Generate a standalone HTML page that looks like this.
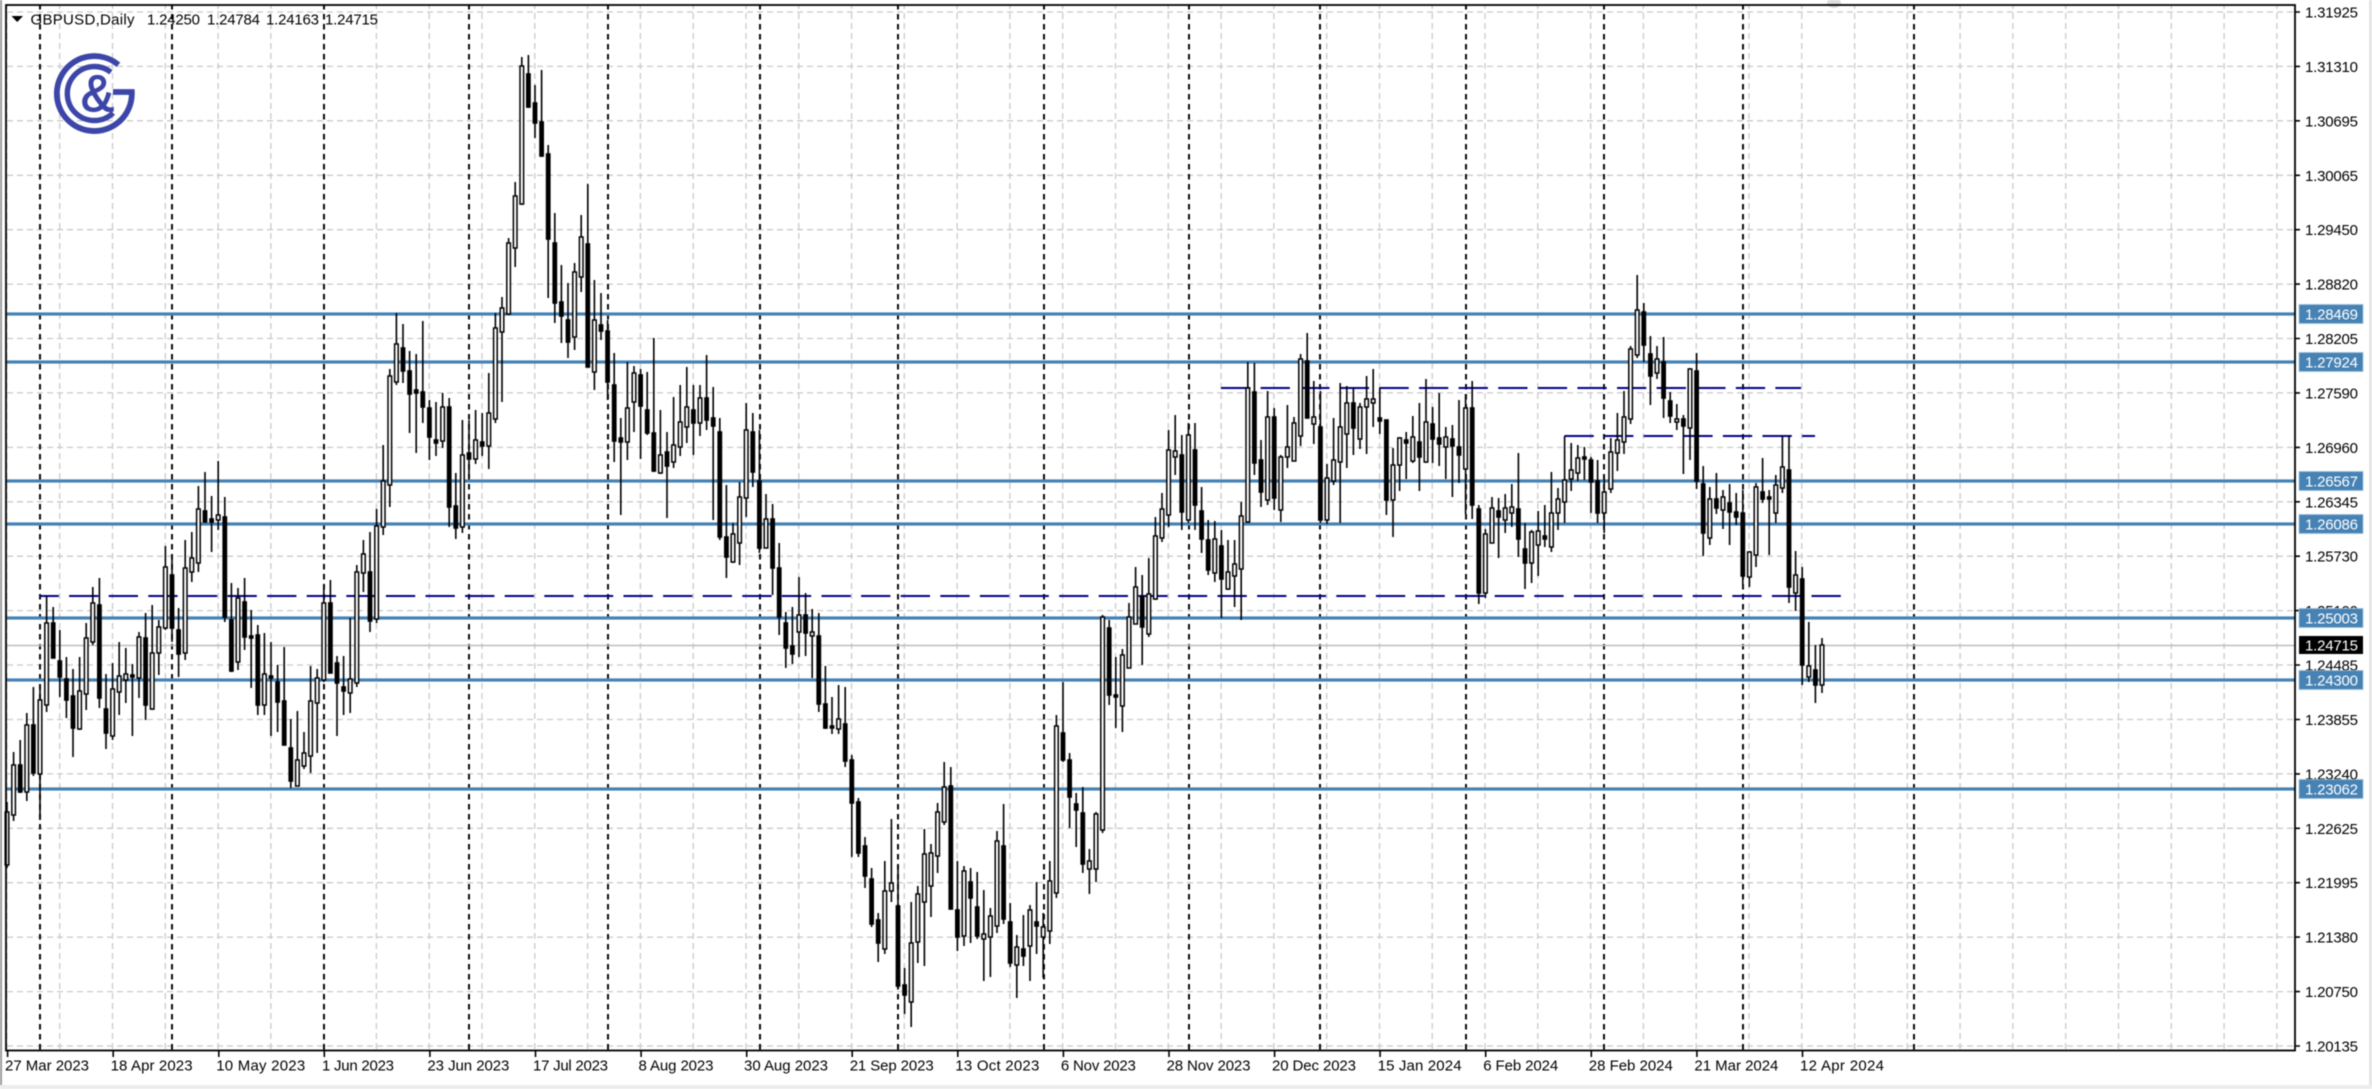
<!DOCTYPE html>
<html>
<head>
<meta charset="utf-8">
<title>GBPUSD,Daily</title>
<style>
html,body{margin:0;padding:0;background:#fff;width:2372px;height:1089px;overflow:hidden}
svg{display:block;position:absolute;left:0;top:0;filter:blur(.4px)}
text{font-family:"Liberation Sans",sans-serif;font-size:15px;fill:#000}
.w{fill:#fff}
</style>
</head>
<body>
<svg id="c" xmlns="http://www.w3.org/2000/svg" width="2372" height="1089" viewBox="0 0 2372 1089">
<rect width="2372" height="1089" fill="#fff"/>
<rect x="0" y="0" width="2" height="1089" fill="#9a9a9a"/>
<rect x="2369" y="0" width="3" height="1089" fill="#e4e4e4"/>
<rect x="0" y="1085" width="2372" height="4" fill="#ececec"/>
<ellipse cx="1834" cy="3" rx="7" ry="5" fill="#dcdcdc"/>
<g id="back"></g>

<g id="logo" fill="none" stroke="#3c46a8">
<path d="M118.4 64.8A37.5 37.5 0 1 0 131.8 92H113" stroke-width="5.8"/>
<path d="M110.9 72.2A27 27 0 1 0 113.1 112.9" stroke-width="5.4"/>
<text x="81" y="111" textLength="33" lengthAdjust="spacingAndGlyphs" style="font-size:51px;fill:#3c46a8;stroke:#3c46a8;stroke-width:1.2">&amp;</text>
</g>

<g id="candles"></g>

<path d="M11.5 16H23L17.2 22Z" fill="#000"/>
<text x="30.5" y="24.5" textLength="104">GBPUSD,Daily</text>
<text x="147" y="24.5" textLength="53">1.24250</text>
<text x="207" y="24.5" textLength="53">1.24784</text>
<text x="266" y="24.5" textLength="53">1.24163</text>
<text x="325" y="24.5" textLength="53">1.24715</text>

<g id="frame"></g>

<g id="yl">
<text x="2305" y="17.5" textLength="53">1.31925</text>
<text x="2305" y="71.9" textLength="53">1.31310</text>
<text x="2305" y="126.3" textLength="53">1.30695</text>
<text x="2305" y="180.8" textLength="53">1.30065</text>
<text x="2305" y="235.2" textLength="53">1.29450</text>
<text x="2305" y="289.6" textLength="53">1.28820</text>
<text x="2305" y="344" textLength="53">1.28205</text>
<text x="2305" y="398.4" textLength="53">1.27590</text>
<text x="2305" y="452.9" textLength="53">1.26960</text>
<text x="2305" y="507.3" textLength="53">1.26345</text>
<text x="2305" y="561.7" textLength="53">1.25730</text>
<text x="2305" y="616.1" textLength="53">1.25100</text>
<text x="2305" y="670.5" textLength="53">1.24485</text>
<text x="2305" y="725" textLength="53">1.23855</text>
<text x="2305" y="779.4" textLength="53">1.23240</text>
<text x="2305" y="833.8" textLength="53">1.22625</text>
<text x="2305" y="888.2" textLength="53">1.21995</text>
<text x="2305" y="942.6" textLength="53">1.21380</text>
<text x="2305" y="997.1" textLength="53">1.20750</text>
<text x="2305" y="1051.5" textLength="53">1.20135</text>
</g>

<g>
<rect x="2299" y="304.5" width="64" height="19" fill="#4682b4" stroke="#9dbfdc" stroke-width=".8"/>
<text class="w" x="2305" y="319.5" textLength="53">1.28469</text>
<rect x="2299" y="352.5" width="64" height="19" fill="#4682b4" stroke="#9dbfdc" stroke-width=".8"/>
<text class="w" x="2305" y="367.5" textLength="53">1.27924</text>
<rect x="2299" y="471.5" width="64" height="19" fill="#4682b4" stroke="#9dbfdc" stroke-width=".8"/>
<text class="w" x="2305" y="486.5" textLength="53">1.26567</text>
<rect x="2299" y="514.5" width="64" height="19" fill="#4682b4" stroke="#9dbfdc" stroke-width=".8"/>
<text class="w" x="2305" y="529.5" textLength="53">1.26086</text>
<rect x="2299" y="608.5" width="64" height="19" fill="#4682b4" stroke="#9dbfdc" stroke-width=".8"/>
<text class="w" x="2305" y="623.5" textLength="53">1.25003</text>
<rect x="2299" y="636" width="64" height="18" fill="#000"/>
<text class="w" x="2305" y="650.5" textLength="53">1.24715</text>
<rect x="2299" y="670.5" width="64" height="19" fill="#4682b4" stroke="#9dbfdc" stroke-width=".8"/>
<text class="w" x="2305" y="685.5" textLength="53">1.24300</text>
<rect x="2299" y="779.5" width="64" height="19" fill="#4682b4" stroke="#9dbfdc" stroke-width=".8"/>
<text class="w" x="2305" y="794.5" textLength="53">1.23062</text>
</g>

<g id="xl">
<text x="5" y="1070.5" textLength="84">27 Mar 2023</text>
<text x="110.6" y="1070.5" textLength="82">18 Apr 2023</text>
<text x="216.2" y="1070.5" textLength="89">10 May 2023</text>
<text x="322" y="1070.5" textLength="72">1 Jun 2023</text>
<text x="427.4" y="1070.5" textLength="82">23 Jun 2023</text>
<text x="533" y="1070.5" textLength="75">17 Jul 2023</text>
<text x="638.5" y="1070.5" textLength="75">8 Aug 2023</text>
<text x="744" y="1070.5" textLength="84">30 Aug 2023</text>
<text x="849.7" y="1070.5" textLength="84">21 Sep 2023</text>
<text x="955.3" y="1070.5" textLength="84">13 Oct 2023</text>
<text x="1060.9" y="1070.5" textLength="75">6 Nov 2023</text>
<text x="1166.5" y="1070.5" textLength="84">28 Nov 2023</text>
<text x="1272" y="1070.5" textLength="84">20 Dec 2023</text>
<text x="1377.6" y="1070.5" textLength="84">15 Jan 2024</text>
<text x="1483.2" y="1070.5" textLength="75">6 Feb 2024</text>
<text x="1588.8" y="1070.5" textLength="84">28 Feb 2024</text>
<text x="1694.4" y="1070.5" textLength="84">21 Mar 2024</text>
<text x="1800" y="1070.5" textLength="84">12 Apr 2024</text>
</g>
</svg>
<script>
(function(){
var d=[
802,812,865,868,1, 752,765,815,821,1, 740,765,792,793,0, 713,725,792,801,1, 687,725,773,776,0,
686,700,774,820,1, 596,623,705,712,1, 607,623,658,658,0, 630,661,677,697,0, 657,679,700,718,0,
669,696,728,757,0, 657,691,729,730,1, 623,638,694,710,1, 587,603,642,645,1, 578,605,698,708,0,
674,709,733,749,0, 663,689,736,740,1, 642,676,692,715,1, 648,674,680,703,1, 664,675,677,736,0,
632,637,678,698,1, 613,638,705,720,0, 605,653,709,710,1, 620,627,653,675,1, 546,567,628,630,1,
558,575,628,642,0, 608,630,654,677,0, 540,568,653,660,1, 532,558,572,582,1, 486,509,563,572,1,
472,511,522,522,0, 496,519,522,552,0, 461,515,520,530,1, 497,517,617,622,0, 583,620,671,672,0,
588,598,662,670,1, 578,602,637,650,0, 610,636,638,688,0, 625,635,705,715,0, 633,674,705,715,1,
642,676,678,736,0, 665,682,702,732,0, 647,701,745,745,0, 719,748,781,788,0, 711,760,786,786,1,
732,753,766,769,1, 666,701,756,773,1, 669,678,703,753,1, 585,603,680,682,1, 580,603,673,673,0,
656,663,683,736,0, 656,687,691,715,0, 618,679,693,713,1, 565,572,683,687,1, 540,554,573,592,1,
532,572,621,632,0, 509,526,619,623,1, 445,481,527,535,1, 369,376,485,507,1, 313,344,382,385,1,
324,348,371,383,0, 351,371,394,433,0, 354,390,393,453,0, 321,392,407,423,0, 400,408,437,460,0,
402,440,443,456,0, 393,407,441,448,1, 398,407,507,527,0, 473,506,528,539,0, 420,455,527,533,1,
420,453,459,477,0, 410,440,459,464,1, 413,442,446,456,0, 373,413,446,469,1, 313,328,419,423,1,
297,308,332,402,1, 238,243,314,315,1, 182,196,248,267,1, 57,66,204,205,1, 55,74,107,108,0,
85,103,123,138,0, 70,122,156,157,0, 145,154,239,298,0, 213,243,303,323,0, 265,302,316,343,0,
283,320,342,358,0, 263,272,337,350,1, 215,237,277,292,1, 184,244,367,367,0, 280,320,372,390,1,
293,325,331,340,0, 320,331,382,400,0, 353,385,441,462,0, 418,438,442,515,0, 362,408,442,460,1,
366,373,402,432,1, 369,375,406,459,0, 372,410,433,435,0, 338,433,471,472,0, 410,455,473,474,1,
432,452,466,518,0, 397,445,462,468,1, 385,422,447,456,1, 367,407,427,443,1, 385,410,423,455,0,
385,398,423,436,1, 355,398,420,430,0, 387,418,426,520,0, 418,432,537,540,0, 485,537,557,578,0,
523,534,562,563,1, 482,497,543,565,1, 403,430,498,517,1, 413,432,472,487,0, 430,481,548,553,0,
494,519,548,548,1, 504,519,568,595,0, 543,568,617,635,0, 612,623,648,668,0, 607,646,654,664,0,
577,615,632,657,1, 593,615,633,656,0, 609,632,636,678,1, 613,636,704,712,0, 666,704,728,729,0,
697,726,728,734,0, 685,719,729,734,1, 687,724,761,767,0, 755,760,803,857,0, 798,802,853,857,0,
837,846,876,888,0, 868,879,924,927,0, 913,920,943,962,0, 861,891,949,954,1, 819,883,891,902,1,
866,906,986,987,0, 968,985,995,1014,0, 902,943,1002,1027,1, 886,894,942,963,1, 829,854,902,966,1,
844,853,886,917,1, 803,812,856,873,1, 762,787,822,825,1, 767,786,909,909,0, 861,910,937,951,0,
866,871,936,946,1, 868,882,898,943,0, 872,907,936,939,0, 890,934,939,981,1, 908,916,937,977,1,
831,841,926,933,1, 804,846,919,924,0, 903,922,963,967,0, 935,947,965,998,1, 915,949,956,966,0,
905,910,946,981,1, 882,922,926,954,0, 913,927,937,978,1, 861,881,931,944,1, 715,726,893,898,1,
682,733,760,762,0, 753,760,797,828,0, 793,804,810,847,0, 787,813,864,873,0, 849,861,869,894,1,
812,814,869,882,1, 615,617,830,833,1, 620,628,695,705,0, 657,695,697,728,0, 649,655,706,732,1,
603,617,668,668,1, 567,587,624,624,1, 575,597,627,665,0, 558,594,634,637,1, 517,536,599,600,1,
493,509,538,542,1, 430,450,515,527,1, 415,451,457,475,1, 435,455,512,530,0, 423,435,520,523,1,
423,450,505,530,0, 487,511,539,553,0, 520,540,570,575,0, 521,539,573,582,1, 530,546,579,618,0,
540,572,589,590,1, 540,564,576,607,1, 502,516,569,620,1, 362,388,522,523,1, 363,392,463,475,0,
440,460,492,507,0, 391,417,500,505,1, 408,417,498,510,0, 455,457,510,522,1, 405,447,457,468,1,
417,423,461,461,1, 354,359,436,446,1, 333,361,418,418,0, 381,417,424,444,1, 391,427,520,523,0,
464,478,520,524,1, 418,460,481,485,1, 383,427,462,523,1, 386,403,434,468,1, 388,403,428,455,0,
403,407,439,449,1, 376,399,407,454,1, 369,399,403,427,1, 388,418,421,434,0, 420,420,500,515,0,
448,465,500,537,1, 437,438,465,491,1, 432,440,443,479,0, 416,437,461,463,1, 403,442,457,491,0,
379,422,462,463,1, 407,424,439,463,0, 393,438,444,466,0, 427,437,447,479,1, 425,439,446,497,0,
400,447,455,483,0, 394,408,469,514,1, 381,408,505,519,0, 505,509,593,604,0, 529,534,593,598,1,
497,508,543,543,1, 498,511,517,558,0, 494,508,520,533,1, 484,507,513,527,1, 453,509,539,557,0,
523,549,563,589,0, 530,532,563,583,1, 511,531,545,576,1, 505,536,539,547,0, 472,513,547,552,1,
488,499,513,530,1, 436,480,502,523,1, 443,470,479,491,1, 445,458,473,481,1, 447,457,459,480,0,
457,460,482,513,0, 460,481,513,523,0, 477,492,513,533,1, 438,452,489,493,1, 413,440,453,471,1,
391,417,442,454,1, 346,349,419,424,1, 275,310,355,358,1, 303,312,345,362,0, 336,354,376,405,0,
346,359,373,379,1, 337,362,398,418,0, 392,401,416,423,0, 404,419,422,430,1, 415,419,426,474,0,
368,369,428,460,1, 353,371,481,489,0, 466,484,533,556,0, 487,499,538,545,1, 473,499,508,514,0,
490,497,510,529,1, 484,503,512,545,0, 493,512,517,525,0, 490,513,576,586,0, 551,552,577,587,1,
483,487,555,567,1, 458,492,499,503,0, 490,497,499,555,0, 475,485,513,523,1, 436,467,488,493,1,
436,470,587,603,0, 551,575,593,611,1, 567,579,665,685,0, 622,666,677,682,1, 645,670,685,703,0,
638,645,685,693,1];
var NS='http://www.w3.org/2000/svg';
function el(p,t,a){var e=document.createElementNS(NS,t);for(var k in a)e.setAttribute(k,a[k]);p.appendChild(e);return e}
var b=document.getElementById('back'),f=document.getElementById('frame'),cg=document.getElementById('candles');
var L=6,R=2295,T=5,B=1050.5,i,x,y;
var cp=el(b,'clipPath',{id:'cl'});el(cp,'rect',{x:L,y:T,width:R-L,height:B-T});
var g=el(b,'g',{'clip-path':'url(#cl)'});
/* grid */
var h='';for(i=0;i<20;i++){y=12+54.42*i;h+='M7 '+y.toFixed(1)+'H'+R}
el(g,'path',{d:h,stroke:'#cacaca','stroke-width':1.3,'stroke-dasharray':'6 4',fill:'none'});
var v='';for(i=-1;i<=42;i++){x=59.7+52.79*i;v+='M'+x.toFixed(1)+' 3V'+B}
el(g,'path',{d:v,stroke:'#cacaca','stroke-width':1.3,'stroke-dasharray':'6 4',fill:'none'});
/* period separators */
var s=[40,172,324,469,608,760,898,1044,1189,1320,1466,1604,1743,1914],sp='';
for(i=0;i<s.length;i++)sp+='M'+s[i]+' 4V'+B;
el(g,'path',{d:sp,stroke:'#000','stroke-width':1.9,'stroke-dasharray':'5.5 4.5',fill:'none'});
/* current price */
el(g,'path',{d:'M6 645.5H'+R,stroke:'#bdbdbd','stroke-width':1.6,fill:'none'});
/* navy trend dashes */
el(g,'path',{d:'M40 596H1841',stroke:'#00008b','stroke-width':2,'stroke-dasharray':'29.3 10.3','stroke-dashoffset':'10.5',fill:'none'});
el(g,'path',{d:'M1221 388H1801',stroke:'#00008b','stroke-width':2,'stroke-dasharray':'29.3 10.3',fill:'none'});
el(g,'path',{d:'M1564.5 436H1815',stroke:'#00008b','stroke-width':2,'stroke-dasharray':'29.3 10.3',fill:'none'});
/* blue levels */
var lv=[314,362,481,524,618,680,789];
for(i=0;i<lv.length;i++)el(g,'rect',{x:L,y:lv[i]-1.6,width:R-L,height:3.2,fill:'#4682b4'});
/* candles */
var wick='',blk='',wht='';
for(i=0;i*5<d.length;i++){
 x=7+6.6*i;var H=d[i*5],O=d[i*5+1],C=d[i*5+2],Lo=d[i*5+3],w=d[i*5+4];
 wick+='M'+x.toFixed(1)+' '+H+'V'+Lo;
 if(w)wht+='<rect x="'+(x-1.8).toFixed(1)+'" y="'+O+'" width="3.6" height="'+(C-O)+'"/>';
 else blk+='<rect x="'+(x-2.4).toFixed(1)+'" y="'+(O-.8)+'" width="4.8" height="'+(C-O+1.6)+'"/>';
}
el(cg,'path',{d:wick,stroke:'#000','stroke-width':1.6,fill:'none'});
var g1=el(cg,'g',{fill:'#000'});g1.innerHTML=blk;
var g2=el(cg,'g',{fill:'#fff',stroke:'#000','stroke-width':1.5});g2.innerHTML=wht;
/* frame and ticks */
el(f,'rect',{x:L,y:T,width:R-L,height:B-T,fill:'none',stroke:'#000','stroke-width':1.8});
var t='';for(i=0;i<20;i++){y=12+54.42*i;t+='M'+R+' '+y.toFixed(1)+'h5'}
for(i=0;i<=17;i++){x=7.6+105.58*i;t+='M'+x.toFixed(1)+' '+B+'v6.5'}
el(f,'path',{d:t,stroke:'#000','stroke-width':1.6,fill:'none'});
})();
</script>
</body>
</html>
